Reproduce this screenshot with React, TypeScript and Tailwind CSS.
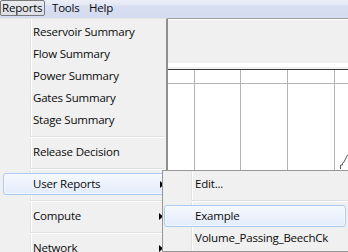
import React from "react";

function Arrow() {
  return (
    <svg width="4" height="7" viewBox="0 0 4 7" className="shrink-0 block">
      <polygon points="0,0 4,3.5 0,7" fill="#000" />
    </svg>
  );
}

function Item({ label, arrow }: { label: string; arrow?: boolean }) {
  return (
    <div className="h-[22px] flex items-center pl-[33px] pr-[3px] leading-[22px] whitespace-nowrap">
      <span className="flex-1">{label}</span>
      {arrow && <Arrow />}
    </div>
  );
}

function HiItem({ label, arrow, left }: { label: string; arrow?: boolean; left: string }) {
  return (
    <div
      className={
        "h-[22px] flex items-center pr-0 leading-[20px] whitespace-nowrap border border-[#a9caf2] rounded-[3px] bg-[linear-gradient(to_bottom,#f5f9fe,#e3ecfa)] shadow-[inset_0_0_0_1px_rgba(255,255,255,0.55)] " +
        left
      }
    >
      <span className="flex-1">{label}</span>
      {arrow && <Arrow />}
    </div>
  );
}

function Sep({ left }: { left: string }) {
  return (
    <div className={"h-[10px] pt-[5px] pr-[2px] " + left}>
      <div className="h-px bg-[#e0e0e0]" />
      <div className="h-px bg-white" />
    </div>
  );
}

function Col({ w }: { w: string }) {
  return (
    <div className={"h-full border-r border-[#b4b4b4] " + w}>
      <div className="h-[14px] border-b border-[#b4b4b4]" />
    </div>
  );
}

export default function App() {
  return (
    <div className="relative w-[348px] h-[252px] overflow-hidden bg-white font-['Segoe_UI','Open_Sans',sans-serif] text-[11.5px] tracking-[-0.2px] text-[#0a0a0a] leading-none">
      {/* Menu bar */}
      <div className="h-[19px] border-b border-[#a0a0a0] bg-[linear-gradient(to_bottom,#ebeef7_0px,#e4e8f5_5px,#d9dff2_6px,#d5dbef_18px)] flex items-start">
        <div className="w-[45px] h-[16px] border border-[#7a7a7a] rounded-[2px] bg-[linear-gradient(to_bottom,#eaebef,#dcdfe7)] pl-[1px] leading-[14px] whitespace-nowrap">
          Reports
        </div>
        <div className="w-[37px] pl-[7px] leading-[16px]">Tools</div>
        <div className="pl-[7px] leading-[16px]">Help</div>
      </div>

      {/* Background window content */}
      <div className="flex h-[233px]">
        <div className="w-[168px] shrink-0 bg-[#f0f0f0]" />
        <div className="flex-1 flex flex-col">
          <div className="h-px bg-white" />
          <div className="h-[43px] bg-[#f0f0f0]" />
          <div className="h-[4px] bg-white" />
          <div className="h-[2px] bg-[#f0f0f0]" />
          <div className="h-px bg-[#3a3a3a]" />
          <div className="flex flex-1">
            <Col w="w-[27px]" />
            <Col w="w-[46px]" />
            <Col w="w-[47px]" />
            <Col w="w-[47px]" />
            <div className="flex-1 h-full">
              <div className="h-[14px] border-b border-[#b4b4b4]" />
            </div>
          </div>
        </div>
      </div>

      {/* chart fragment */}
      <svg className="absolute left-[338px] top-[152px]" width="10" height="18" viewBox="0 0 10 18">
        <polyline points="2.5,17 2.5,13 4.5,13 4.5,11 6,10 8,6 9.5,3" fill="none" stroke="#5a5a5a" strokeWidth="1" />
      </svg>

      {/* Reports dropdown */}
      <div className="absolute left-0 top-[18px] w-[168px] h-[250px] border-t border-[#e6e6e6] border-r-2 border-r-[#8e8e8e] pt-[2px] bg-[linear-gradient(90deg,#f0f0f0_30px,#e2e3e3_30px,#e2e3e3_31px,#ffffff_31px,#ffffff_32px,#f0f0f0_32px)]">
        <Item label="Reservoir Summary" />
        <Item label="Flow Summary" />
        <Item label="Power Summary" />
        <Item label="Gates Summary" />
        <Item label="Stage Summary" />
        <Sep left="pl-[30px]" />
        <Item label="Release Decision" />
        <Sep left="pl-[30px]" />
        <HiItem label="User Reports" arrow left="ml-[3px] mr-[1px] pl-[29px]" />
        <Sep left="pl-[30px]" />
        <Item label="Compute" arrow />
        <Sep left="pl-[30px]" />
        <Item label="Network" arrow />
      </div>

      {/* User Reports submenu */}
      <div className="absolute left-[162px] top-[170px] w-[190px] h-[82px] border border-[#979797] pt-[2px] pb-[2px] bg-[linear-gradient(90deg,#f0f0f0_28px,#e2e3e3_28px,#e2e3e3_29px,#ffffff_29px,#ffffff_30px,#f0f0f0_30px)]">
        <div className="h-[22px] flex items-center pl-[32px] leading-[22px] whitespace-nowrap">Edit...</div>
        <Sep left="pl-[28px]" />
        <HiItem label="Example" left="ml-[1px] mr-[5px] pl-[30px]" />
        <div className="h-[22px] flex items-center pl-[32px] leading-[22px] whitespace-nowrap">Volume_Passing_BeechCk</div>
      </div>
    </div>
  );
}
